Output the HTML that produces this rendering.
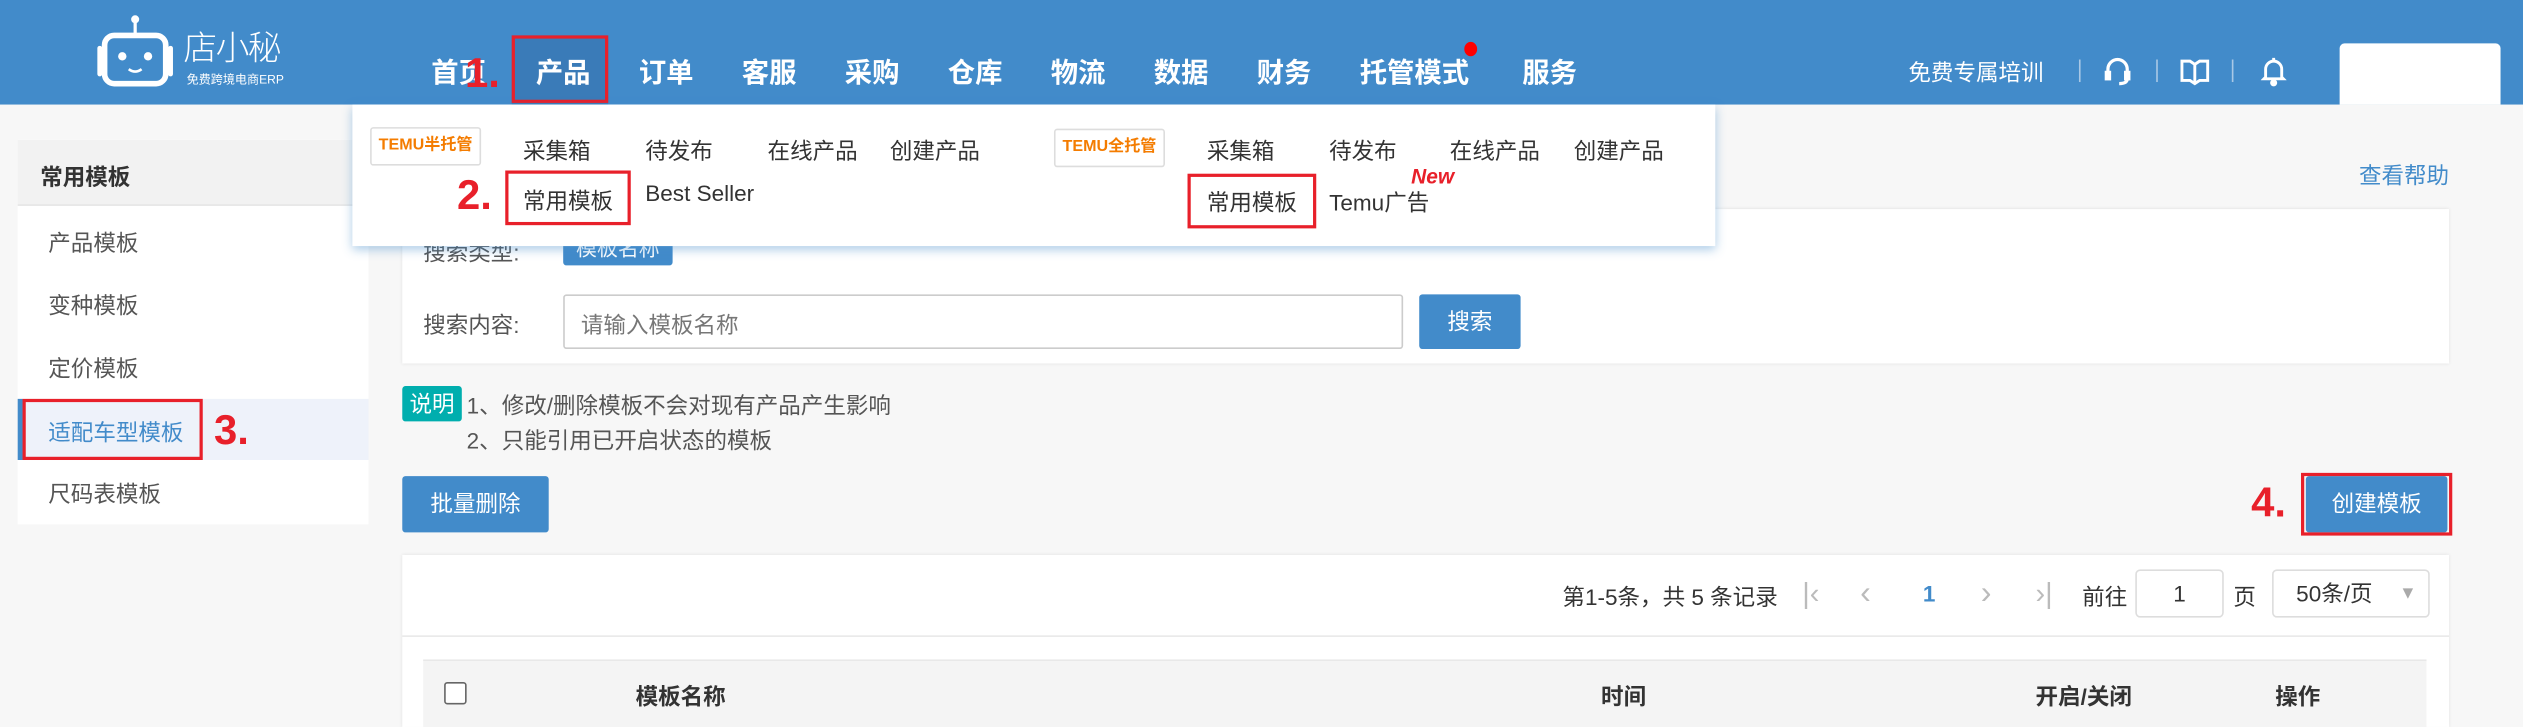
<!DOCTYPE html>
<html><head><meta charset="utf-8"><style>
*{margin:0;padding:0;box-sizing:border-box}
html,body{width:2523px;height:727px;overflow:hidden;background:#f7f7f7}
#w{position:absolute;left:0;top:0;width:1568px;height:452px;transform:scale(1.6091,1.6084);transform-origin:0 0;font-family:"Liberation Sans","Noto Sans CJK SC",sans-serif;font-size:14px;color:#555}
.a{position:absolute;white-space:nowrap}
.hd{left:0;top:0;width:1568px;height:65px;background:#428bca}
.nav{top:31px;font-size:17px;font-weight:bold;color:#fff}
.red{color:#e8202a;font-weight:bold;font-size:26px;font-family:"Liberation Sans",sans-serif}
.rb{border:2px solid #e8202a}
.btn{background:#428bca;color:#fff;text-align:center;border-radius:2px}
.side{color:#555;left:30px}
.dd{color:#333}
</style></head><body><div id="w">
<div class="a hd"></div>
<!-- logo -->
<svg class="a" style="left:56px;top:8px" width="56" height="50" viewBox="0 0 56 50">
<circle cx="28" cy="4" r="2.5" fill="#fff"/><rect x="27" y="5" width="2" height="9" fill="#fff"/>
<rect x="9" y="14" width="38" height="30" rx="6" fill="none" stroke="#fff" stroke-width="3.5"/>
<path d="M6 22v16M50 22v16" stroke="#fff" stroke-width="3" stroke-linecap="round"/>
<circle cx="20" cy="27" r="2.6" fill="#fff"/><circle cx="36" cy="27" r="2.6" fill="#fff"/>
<path d="M24 35q4 3 8 0" stroke="#fff" stroke-width="1.6" fill="none"/>
</svg>
<div class="a" style="left:114px;top:14px;font-size:21px;color:#fff;letter-spacing:-1px;font-weight:300">店小秘</div>
<div class="a" style="left:116px;top:44px;font-size:7.5px;color:#fff">免费跨境电商ERP</div>
<div class="a" style="left:318px;top:22px;width:60px;height:43px;background:#3a7bb8"></div>
<div class="a rb" style="left:318px;top:22px;width:60px;height:42px"></div>
<div class="a nav" style="left:268px">首页</div>
<div class="a red" style="left:289px;top:30px">1.</div>
<div class="a nav" style="left:333px">产品</div>
<div class="a nav" style="left:397px">订单</div>
<div class="a nav" style="left:461px">客服</div>
<div class="a nav" style="left:525px">采购</div>
<div class="a nav" style="left:589px">仓库</div>
<div class="a nav" style="left:653px">物流</div>
<div class="a nav" style="left:717px">数据</div>
<div class="a nav" style="left:781px">财务</div>
<div class="a nav" style="left:845px">托管模式</div>
<div class="a" style="left:910px;top:26px;width:8px;height:9px;border-radius:50%;background:#f00"></div>
<div class="a nav" style="left:946px">服务</div>
<div class="a" style="left:1186px;top:35px;color:#fff;font-size:14px">免费专属培训</div>
<div class="a" style="left:1292px;top:37px;width:1px;height:14px;background:#a9c8e6"></div>
<div class="a" style="left:1340px;top:37px;width:1px;height:14px;background:#a9c8e6"></div>
<div class="a" style="left:1387px;top:37px;width:1px;height:14px;background:#a9c8e6"></div>
<svg class="a" style="left:1302px;top:34px" width="28" height="22" viewBox="0 0 28 22" fill="none" stroke="#fff" stroke-width="2"><path d="M8 12V9a6 6 0 0 1 12 0v3"/><rect x="7" y="11" width="2" height="4" fill="#fff"/><rect x="19" y="11" width="2" height="4" fill="#fff"/><path d="M20 15q0 3-5 3"/></svg>
<svg class="a" style="left:1354px;top:36px" width="20" height="18" viewBox="0 0 20 18" fill="none" stroke="#fff" stroke-width="1.8"><path d="M2 2h5l3 2 3-2h5v12h-5l-3 2-3-2H2z"/><path d="M10 4v12"/></svg>
<svg class="a" style="left:1405px;top:34px" width="16" height="20" viewBox="0 0 16 20" fill="none" stroke="#fff" stroke-width="1.8"><path d="M3 14V9a5 5 0 0 1 10 0v5l1 1H2z"/><circle cx="8" cy="17.5" r="1.3" fill="#fff"/><path d="M8 2v2"/></svg>
<div class="a" style="left:1454px;top:27px;width:100px;height:38px;background:#fff;border-radius:3px 3px 0 0"></div>

<!-- help -->
<div class="a" style="left:1466px;top:99px;color:#428bca">查看帮助</div>

<!-- sidebar -->
<div class="a" style="left:11px;top:87px;width:218px;height:239px;background:#fff"></div>
<div class="a" style="left:11px;top:87px;width:218px;height:41px;background:#f2f2f2;border-bottom:1px solid #e6e6e6"></div>
<div class="a" style="left:25px;top:100px;font-weight:bold;color:#333">常用模板</div>
<div class="a side" style="top:141px">产品模板</div>
<div class="a side" style="top:180px">变种模板</div>
<div class="a side" style="top:219px">定价模板</div>
<div class="a" style="left:11px;top:248px;width:218px;height:38px;background:#eef2fa;border-left:3px solid #428bca"></div>
<div class="a side" style="top:259px;color:#428bca">适配车型模板</div>
<div class="a rb" style="left:14px;top:248px;width:112px;height:38px"></div>
<div class="a red" style="left:133px;top:252px">3.</div>
<div class="a side" style="top:297px">尺码表模板</div>

<!-- search panel -->
<div class="a" style="left:250px;top:130px;width:1272px;height:96px;background:#fff;box-shadow:0 0 2px #ddd"></div>
<div class="a" style="left:263px;top:147px">搜索类型:</div>
<div class="a btn" style="left:350px;top:145px;width:68px;height:20px;font-size:13px;line-height:20px">模板名称</div>
<div class="a" style="left:263px;top:192px">搜索内容:</div>
<div class="a" style="left:350px;top:183px;width:522px;height:34px;border:1px solid #ccc;background:#fff;border-radius:2px"></div>
<div class="a" style="left:361px;top:192px;color:#777">请输入模板名称</div>
<div class="a btn" style="left:882px;top:183px;width:63px;height:34px;line-height:34px">搜索</div>

<!-- dropdown -->
<div class="a" style="left:219px;top:65px;width:847px;height:88px;background:#fff;box-shadow:0 2px 6px rgba(66,139,202,.45)"></div>
<div class="a" style="left:230px;top:79px;width:69px;height:24px;border:1px solid #ddd;border-radius:2px;color:#f47c00;font-weight:bold;font-size:10px;line-height:22px;text-align:center">TEMU半托管</div>
<div class="a dd" style="left:325px;top:84px">采集箱</div>
<div class="a dd" style="left:401px;top:84px">待发布</div>
<div class="a dd" style="left:477px;top:84px">在线产品</div>
<div class="a dd" style="left:553px;top:84px">创建产品</div>
<div class="a dd" style="left:325px;top:115px">常用模板</div>
<div class="a dd" style="left:401px;top:112px">Best Seller</div>
<div class="a rb" style="left:314px;top:106px;width:78px;height:34px"></div>
<div class="a red" style="left:284px;top:106px">2.</div>
<div class="a" style="left:655px;top:80px;width:69px;height:24px;border:1px solid #ddd;border-radius:2px;color:#f47c00;font-weight:bold;font-size:10px;line-height:22px;text-align:center">TEMU全托管</div>
<div class="a dd" style="left:750px;top:84px">采集箱</div>
<div class="a dd" style="left:826px;top:84px">待发布</div>
<div class="a dd" style="left:901px;top:84px">在线产品</div>
<div class="a dd" style="left:978px;top:84px">创建产品</div>
<div class="a dd" style="left:750px;top:116px">常用模板</div>
<div class="a dd" style="left:826px;top:116px">Temu广告</div>
<div class="a" style="left:877px;top:102px;color:#e8202a;font-weight:bold;font-style:italic;font-size:13px">New</div>
<div class="a rb" style="left:738px;top:108px;width:80px;height:34px"></div>

<!-- notes -->
<div class="a" style="left:250px;top:240px;width:37px;height:22px;background:#00aeae;color:#fff;text-align:center;line-height:22px;border-radius:2px">说明</div>
<div class="a" style="left:290px;top:242px">1、修改/删除模板不会对现有产品产生影响</div>
<div class="a" style="left:290px;top:264px">2、只能引用已开启状态的模板</div>
<div class="a btn" style="left:250px;top:296px;width:91px;height:35px;line-height:35px">批量删除</div>
<div class="a btn" style="left:1433px;top:296px;width:88px;height:35px;line-height:35px">创建模板</div>
<div class="a rb" style="left:1430px;top:294px;width:94px;height:39px"></div>
<div class="a red" style="left:1399px;top:297px">4.</div>

<!-- table -->
<div class="a" style="left:250px;top:345px;width:1272px;height:107px;background:#fff;box-shadow:0 0 2px #ddd"></div>
<div class="a" style="left:971px;top:361px;color:#333">第1-5条，共 5 条记录</div>
<div class="a" style="left:1120px;top:359px;color:#bbb;font-size:18px">|&lsaquo;</div>
<div class="a" style="left:1156px;top:358px;color:#bbb;font-size:20px">&lsaquo;</div>
<div class="a" style="left:1195px;top:361px;color:#428bca;font-weight:bold">1</div>
<div class="a" style="left:1231px;top:358px;color:#bbb;font-size:20px">&rsaquo;</div>
<div class="a" style="left:1265px;top:359px;color:#bbb;font-size:18px">&rsaquo;|</div>
<div class="a" style="left:1294px;top:361px;color:#333">前往</div>
<div class="a" style="left:1327px;top:354px;width:55px;height:30px;border:1px solid #ddd;border-radius:3px;text-align:center;line-height:28px;color:#333">1</div>
<div class="a" style="left:1388px;top:361px;color:#333">页</div>
<div class="a" style="left:1412px;top:354px;width:98px;height:30px;border:1px solid #ddd;border-radius:3px;line-height:28px;padding-left:14px;color:#333">50条/页<span style="position:absolute;left:78px;top:0;color:#aaa;font-size:11px">▼</span></div>
<div class="a" style="left:250px;top:395px;width:1272px;height:1px;background:#e8e8e8"></div>
<div class="a" style="left:263px;top:410px;width:1245px;height:42px;background:#f4f4f4;border-top:1px solid #e8e8e8"></div>
<div class="a" style="left:276px;top:424px;width:14px;height:14px;border:1px solid #666;background:#fff;border-radius:2px"></div>
<div class="a" style="left:395px;top:423px;font-weight:bold;color:#333">模板名称</div>
<div class="a" style="left:995px;top:423px;font-weight:bold;color:#333">时间</div>
<div class="a" style="left:1265px;top:423px;font-weight:bold;color:#333">开启/关闭</div>
<div class="a" style="left:1414px;top:423px;font-weight:bold;color:#333">操作</div>
</div></body></html>
